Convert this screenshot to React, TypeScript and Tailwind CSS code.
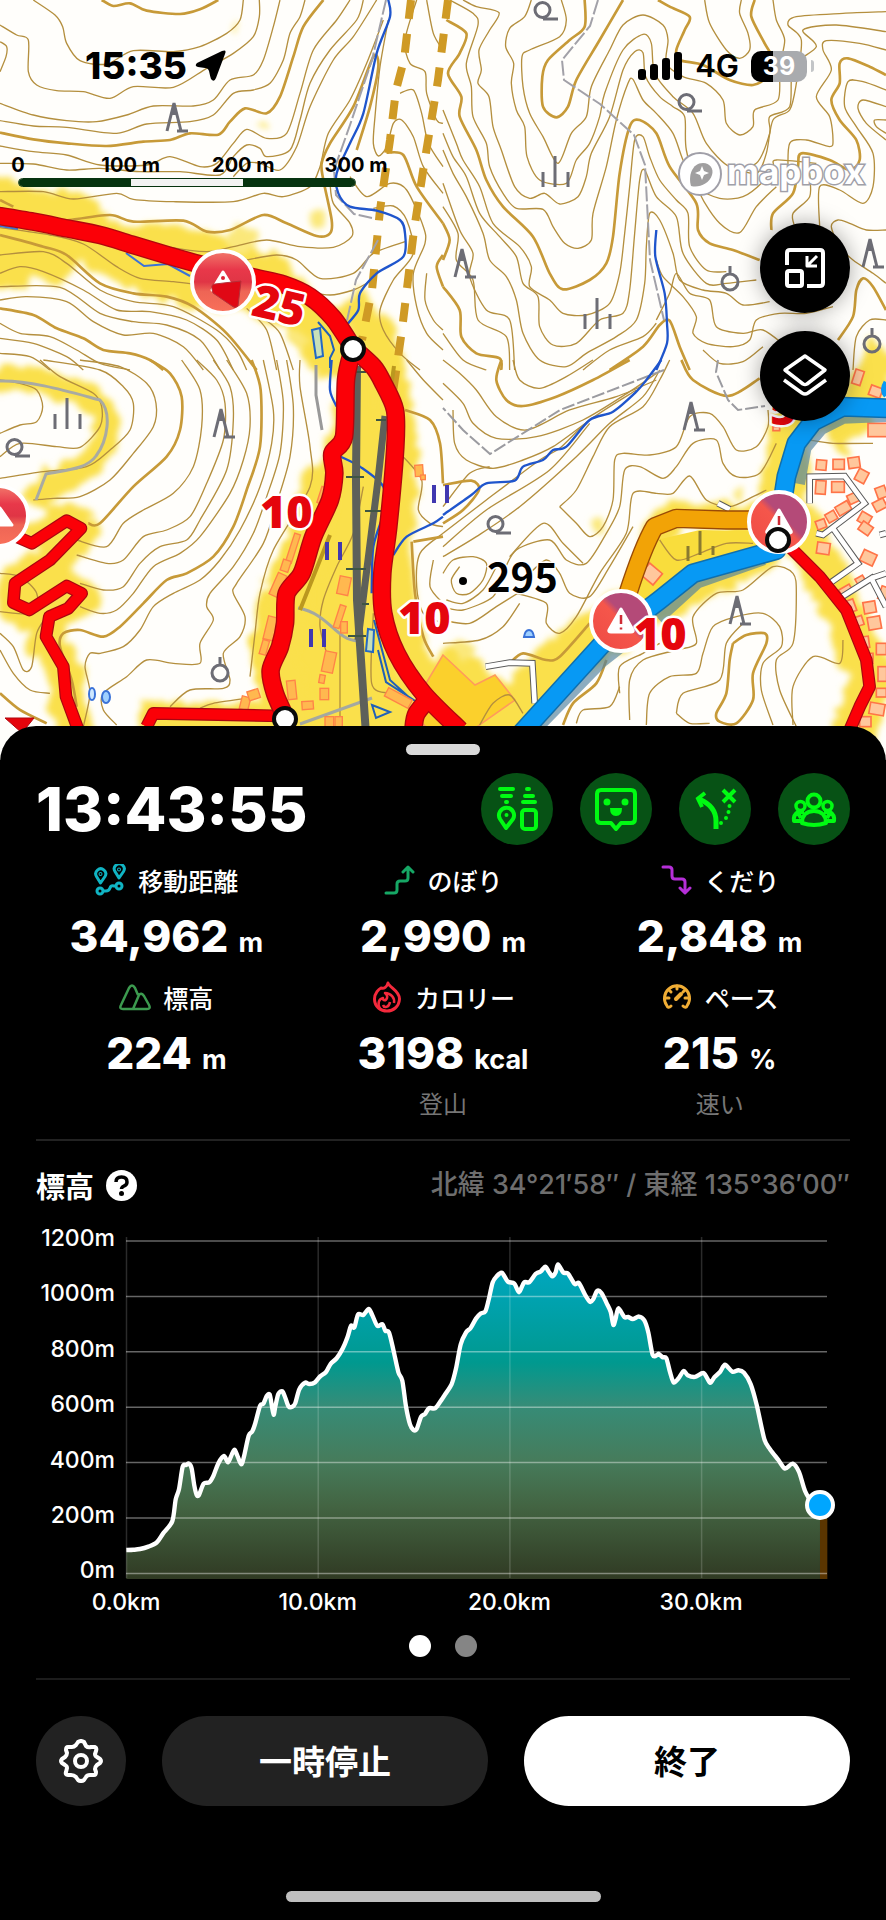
import React from "react";

/* ---------- geometry helpers ---------- */

type Pt = [number, number];

const parse = (s: string): Pt[] =>
  s.trim().split(/\s+/).map((p) => p.split(",").map(Number) as unknown as Pt);

const smooth = (s: string): string => {
  const p = parse(s);
  let d = `M${p[0][0]} ${p[0][1]}`;
  for (let i = 0; i < p.length - 1; i++) {
    const a = p[i - 1] ?? p[i];
    const b = p[i];
    const c = p[i + 1];
    const e = p[i + 2] ?? c;
    d += `C${b[0] + (c[0] - a[0]) / 7} ${b[1] + (c[1] - a[1]) / 7} ${c[0] - (e[0] - b[0]) / 7} ${c[1] - (e[1] - b[1]) / 7} ${c[0]} ${c[1]}`;
  }
  return d;
};

/* The map is drawn as four tiles, three units to the pixel. */
const origin = ["translate(0 0)", "translate(443 0)", "translate(0 360)", "translate(443 360)"];

function Lines({ tile, paths, ...rest }: { tile: number; paths: string[] } & React.SVGProps<SVGGElement>) {
  return (
    <g transform={`${origin[tile]} scale(.33333)`} fill="none" strokeLinejoin="round" {...rest}>
      {paths.map((p, i) => (
        <path key={i} d={smooth(p)} />
      ))}
    </g>
  );
}

const thin: string[][] = [
  [
    "100,0 165,45 188,80 200,130 240,182 320,192 400,152 520,155 600,140 680,100 720,60 730,0",
    "0,75 50,105 85,120 85,215 110,255 170,272 250,275 330,295 400,260 520,262 620,205 700,160 760,110 778,50 778,0",
    "0,125 20,140 18,170 0,215",
    "0,310 100,345 200,362 290,365 380,345 460,318 580,318 640,300 690,240 760,225 790,180 820,80 840,0",
    "0,362 100,378 200,382 350,400 440,372 570,365 640,345 700,280 760,270 810,250 850,180 870,100 900,50 915,0",
    "0,438 100,455 200,465 300,495 440,495 510,470 600,500 650,490 700,430 740,388 800,415 860,400 900,280 940,150 1010,60 1050,0",
    "0,490 100,492 200,510 300,505 420,515 540,515 660,525 700,470 740,435 780,445 800,470 870,450 900,360 930,250 990,150 1070,60 1090,0",
    "0,575 130,575 220,597 350,580 400,598 520,605 700,605 790,580 850,590 930,560 960,500 985,400 1050,300 1100,190 1150,60",
    "700,530 740,490 780,490 840,510 890,440 930,320 1000,180 1060,110 1130,0",
    "330,700 500,740 620,755 700,740 800,720 900,740 1000,742 1055,710 1050,670 1000,610 990,550",
    "740,780 830,765 890,780 960,835 1060,820 1120,760 1215,725",
    "900,870 990,885 1060,870 1100,850",
    "0,683 150,705 250,732 350,800 420,835 520,845 600,855",
    "0,765 130,755 200,790 300,870 400,905 520,920 650,990 710,1050 740,1110",
    "0,820 60,800 130,815 250,870 350,930 450,935 560,960 650,1020 700,1110",
    "0,860 180,862 300,940 400,965 500,975 600,1020 660,1110",
    "0,900 80,890 200,905 280,965 370,1005 460,1000 550,1040 610,1110",
    "0,970 60,1000 150,1010 230,1050 300,1090 390,1110",
    "0,1015 100,1030 200,1070 250,1110",
    "0,1060 90,1070 150,1110",
    "740,925 800,990 830,1110",
    "790,955 840,1000 880,1110",
    "1165,60 1140,200 1125,350 1120,430 1135,468 1160,440 1180,370 1205,360 1240,410 1270,500 1329,580",
    "1250,0 1215,120 1230,190 1275,215 1280,280 1310,360 1329,370",
    "1200,280 1240,270 1265,340 1285,430 1329,500",
    "1050,530 1100,590 1170,550 1220,570 1270,680 1275,730 1240,820 1250,920 1280,1000 1329,1050",
    "1120,625 1180,618 1220,660 1240,760 1180,840 1140,930 1150,990 1200,1060 1260,1110",
    "1280,820 1275,900 1300,960 1329,990",
    "1280,0 1300,100 1329,150",
  ],
  [
    "60,0 100,20 168,38 140,90 108,150 115,210 105,250 138,290 150,380 175,450 215,560 260,595 305,580 350,612 405,590 430,530 445,460 500,350 540,210 575,155 600,158 608,230 650,290 690,320 725,350 730,450 770,580 830,670 890,698 940,620 1000,560",
    "20,0 90,40 105,75 70,190 85,260 90,350 130,430 140,500 180,580 220,625 300,628 330,680 365,730 405,745 445,720 450,640 490,500 520,360 555,250 570,238 600,300 640,340 690,400 720,480 760,560 830,595 900,590 960,545 990,500 1000,480 1120,490",
    "265,0 245,50 200,85 188,140 212,190 205,250 220,330 245,380 252,470 290,540 370,550 400,480 440,430 470,350 485,280 540,150 600,103 625,130 635,220 690,290 750,340 790,430 860,500 940,490 980,400 980,350 1040,320 1050,200 1120,140 1080,90 1180,75 1329,95",
    "355,0 370,60 350,110 260,150 237,170 240,260 260,340 300,410 345,490 385,400 430,350 445,260 500,150 540,75 600,45 660,75 675,120 670,190 720,230 790,250 840,300 850,370 890,405 930,380 935,330 1005,300 1010,200 1025,120 1000,60 990,0",
    "785,0 800,70 850,150 890,175 920,150 915,100 890,40 895,0",
    "1329,35 1200,40 1060,50 1035,75 1075,120 1060,250 1040,330 990,360 970,460 940,520 860,500",
    "1329,150 1250,130 1150,122 1140,150 1165,210 1120,290 1160,350 1170,420 1160,440 1090,420 1040,430 1035,520",
    "1329,270 1260,245 1215,245 1205,320 1240,380 1290,460 1290,560 1260,610 1190,570 1130,560 1130,680",
    "1329,320 1260,300 1245,325 1270,370 1329,420",
    "1329,360 1295,360 1300,380 1329,400",
    "1100,520 1100,590 1050,640 1055,680",
    "0,330 40,430 60,480 110,560 150,670 230,740 265,800 260,860 320,900 360,940 430,945 500,910 530,820 545,700 560,560 575,420 600,410 620,470 650,540 700,600 735,640 740,740 790,810 850,815",
    "0,400 30,470 70,530 110,640 170,710 220,770 240,850 285,890 290,980 330,1035 400,1030 470,960 540,940 560,870 575,700 590,540 605,510 640,590 700,650 720,760 790,850 850,850 940,840",
    "0,450 30,520 70,590 120,700 140,780 190,830 220,900 240,1000 290,1080 370,1100 430,1060 520,1010 580,960 605,850 610,740 620,640 650,660 690,760 710,840 780,870 850,880 900,915 980,905",
    "0,550 50,690 90,760 80,830 130,930 200,960 215,1110",
    "0,620 45,700 40,780 90,840 105,960 190,1010 200,1110",
    "640,780 660,830 720,890 760,950 750,1000 790,1030 870,1040 920,1020 940,960 1010,940 1090,940 1170,920",
    "640,960 680,880 700,820 740,880 800,900 820,980 900,1000 960,990 1030,1040",
    "780,1050 830,1090 900,1085 960,1040",
    "1329,690 1270,690 1220,670 1185,660 1165,680 1190,740 1230,780 1290,820 1329,850",
    "0,1000 60,1080 130,1110",
    "1329,960 1280,960 1240,1010 1230,1110",
    "420,1110 500,1050 600,1010 640,970",
  ],
  [
    "130,0 300,30 370,80 400,130 390,210 330,270 260,320 130,335 0,355",
    "240,0 360,20 440,70 468,130 460,200 400,280 330,360 240,410 160,415 100,420",
    "0,60 60,70 110,90 128,140 110,185 60,195 0,220",
    "120,0 180,50 280,100 305,140 300,200 240,262 170,260 60,250 0,290",
    "0,640 60,650 110,700 100,760 0,755",
    "545,0 600,90 605,200 580,320 520,400 430,450 370,490 320,560 230,540",
    "590,0 650,60 675,130 670,240 620,370 570,470 500,510 430,530 370,600 320,610 230,585",
    "640,0 690,80 700,180 680,330 600,480 560,540 480,560 420,610 370,680 310,690 240,670",
    "680,0 740,100 750,200 730,300 690,400 600,530 540,580 460,620 400,700 350,750 300,760 240,740",
    "790,0 820,150 815,250 780,380 720,510 660,600 600,660 520,700 460,740 420,810 370,860 300,880 270,880 255,920 270,1000 250,1100",
    "830,0 850,130 840,280 800,410 760,520 700,620 630,700 620,740 640,780 600,850 600,910 520,910 440,900 380,950 310,1000 310,1050 350,1095",
    "860,0 880,140 870,290 830,430 790,550 710,670 700,700 735,770 720,830 670,880 690,960 670,985 570,990 510,1040",
    "900,0 900,80 930,260 930,380 820,570 780,700 765,820 750,950",
    "0,870 40,940 90,990 150,1000",
    "0,820 40,860 70,930 95,920 110,820 140,770",
    "600,1045 640,1030 740,1015",
    "1220,0 1270,60 1329,120",
    "1200,280 1265,360 1255,450 1290,490 1329,500",
    "1329,520 1260,580 1250,680 1270,760 1329,790",
    "1300,600 1290,680 1329,730",
    "1090,380 1060,520 1010,620 970,720 960,800 980,880",
    "1020,820 1020,1100",
    "1120,760 1115,970 1170,1000",
  ],
  [
    "0,70 60,130 90,190 160,235 280,230 420,180 560,95 640,40",
    "0,0 50,40 100,90 160,170 250,210 380,150 520,110 640,60",
    "210,0 230,60 290,85 370,50 450,0",
    "30,150 35,250 70,300 150,325 240,300 330,260 440,180",
    "0,520 130,420 290,300 350,265 440,180 580,90",
    "0,560 130,450 320,330 440,190",
    "0,590 100,530 230,440 400,290 500,190 600,110 650,30",
    "350,440 400,390 450,290 500,200 600,140 650,60 680,0",
    "350,440 400,490 440,530 480,500 510,420 515,300 540,280 620,285 700,260 740,170 800,160 840,200 880,270 940,260 975,200 975,150",
    "0,440 80,340 140,320",
    "0,740 60,750 150,710 180,640 220,570 320,540 370,600 430,610 490,520 530,440 545,330 590,320 660,355 700,320 750,250 820,240 840,310 880,350 950,340 1000,250",
    "220,700 310,730 310,790 350,820 400,770 470,640 550,520 570,400 640,400 690,400 740,348 790,420 860,440 930,410 970,390",
    "200,590 300,490 360,550 420,610",
    "250,650 310,600 350,640 380,700 440,710 500,620 570,500",
    "0,640 30,600 90,590 130,610 120,660 80,700 40,700 25,660 50,620",
    "10,720 60,730 120,690 160,620",
    "0,780 80,790 160,740 240,690",
    "0,850 110,840 180,800 230,730",
    "560,1080 560,960 600,900 700,870 760,850 750,770 820,700 900,690 990,620 1050,640 1060,700 1050,850 1000,900 1010,990 1060,1100",
    "610,1095 620,1000 680,950 760,940 780,880 810,800 880,770 960,760 1010,800 1015,860 960,910 955,990 990,1095",
    "530,1000 530,920 600,880 650,850",
    "700,1060 720,1000 830,960 850,850 900,790",
    "1050,1095 1050,980 1110,890 1190,910 1200,840",
    "400,1090 420,1050 500,1040 530,980",
    "110,1095 150,1030 200,1005 240,1060",
    "650,540 700,600 770,580 850,550 930,550",
    "1100,240 1170,250 1290,250",
    "700,1060 740,1090 800,1090",
  ],
];

const thick: string[][] = [
  [
    "0,398 100,418 200,430 320,438 430,425 510,420 570,400 655,404 690,365 735,325 800,340 840,290 880,170 910,80 970,0",
    "305,0 340,18 390,10 440,32 540,42 600,28 655,0",
    "200,662 330,645 400,665 550,662 620,695 690,690 790,645 860,670 950,708 990,700 995,660 970,540 965,490 990,430 1060,320 1120,170 1135,200 1110,320 1070,450",
    "0,705 130,740 200,765 300,850 400,880 500,890 580,920 680,1000 770,1110",
    "0,925 100,945 170,985 250,1015 310,1050 390,1060 450,1080 490,1110",
    "1160,458 1210,465 1250,560 1329,670",
    "1329,765 1310,800 1329,860",
    "0,600 40,620",
  ],
  [
    "425,0 425,80 380,120 315,180 298,230 300,320 340,352 375,320 400,240 470,120 540,0",
    "645,0 680,20 740,50 725,90 700,150 710,180 780,195 860,240 930,255 970,230 985,170 965,130 925,50 935,0",
    "1329,225 1280,200 1215,175 1190,190 1190,250 1165,300 1190,360 1240,420 1250,480 1220,510 1160,480 1075,460 1065,500 1050,580 990,640 985,690",
    "10,60 70,100 50,160 15,220 55,290 50,350 100,450 130,540 180,620 270,710 320,820 360,868 440,840 490,790 510,710 530,520 560,380 590,360 640,400 680,500 760,610 765,690 800,730 870,750 950,780",
    "0,860 50,930 55,1010 100,1060 170,1075 175,1110",
    "500,1110 600,1040 650,975 680,962 710,1040 740,1110",
    "1329,930 1290,860 1260,835 1240,870 1230,950 1185,1020",
    "0,670 20,720 0,780",
  ],
  [
    "450,0 510,40 545,110 540,210 500,290 400,380 300,490 265,490",
    "755,0 782,90 780,260 740,390 700,500 640,590 560,640 500,660 430,730 360,800 310,830 240,810 190,820 180,860 215,960 230,1040",
    "1215,150 1290,180 1320,250 1329,370",
    "0,1000 60,1050 140,1090",
    "1235,545 1245,700 1270,830 1300,890",
    "1329,530 1240,545",
  ],
  [
    "175,0 160,60 190,120 240,138 340,110 450,60 560,0",
    "715,0 750,60 855,108 950,55",
    "0,375 85,362 108,390 60,450 0,490",
    "870,850 910,825 965,820 970,850 930,940 930,1020 880,1090 830,1085 820,1060 850,1000 860,900 870,850",
    "200,910 240,880 310,900 350,890 440,790",
    "360,1095 390,1030 460,970 490,900",
  ],
];

const water: string[][] = [
  [
    "1165,0 1170,50 1130,160 1090,340 1050,430 1010,520 1015,580 1050,620 1130,632 1200,660 1215,700 1210,770 1130,820 1080,880 1075,930 1040,975",
  ],
  ["640,690 637,770 665,880 672,970 672,1030 640,1110"],
  ["1180,585 1220,530 1300,490 1329,470", "1022,290 1080,320 1150,380 1150,460 1120,560 1115,700", "995,0 990,90 1010,140"],
  ["655,0 610,60 580,95 510,155 440,180 370,260 330,270 300,300 240,320 215,362 130,370 85,405 0,465"],
];

const redWide: { t: number; p: string }[] = [
  { t: 0, p: "-20,645 100,665 200,685 300,705 400,735 500,765 600,793 760,832 850,853 930,890 1000,955 1060,1045" },
  { t: 2, p: "1055,-20 1038,60 1032,230 997,280 1003,340 990,420 940,530 905,640 860,700 855,790 840,860 812,930 825,1000 860,1080" },
  { t: 2, p: "1060,-35 1120,20 1150,70 1185,150 1186,260 1165,500 1147,640 1150,760 1190,880 1270,1000 1380,1110" },
  { t: 2, p: "1300,1000 1250,1060 1240,1110" },
];
const redNarrow: { t: number; p: string }[] = [
  { t: 2, p: "50,530 95,550 200,482 243,505 150,600 45,670 40,728 88,750 200,678 245,700 205,745 148,770 138,830 190,920 198,1010 235,1110" },
  { t: 2, p: "850,1068 460,1060 440,1100" },
  { t: 3, p: "1040,560 1130,650 1210,750 1270,900 1280,980 1250,1040 1220,1110" },
];

const eastHouses: [number, number, number, number, number][] = [
  [1120, 300, 30, 30, 5], [1170, 298, 34, 30, 0], [1216, 292, 34, 32, -8], [1118, 362, 30, 40, 4], [1166, 365, 38, 32, 0],
  [1240, 330, 32, 36, 28], [1232, 30, 26, 44, 18], [1180, 430, 42, 30, -30], [1150, 456, 30, 28, -30], [1215, 400, 34, 28, -25],
  [1248, 460, 34, 32, 30], [1292, 420, 36, 30, -28], [1120, 480, 28, 26, -20], [1122, 548, 38, 34, 8], [1250, 490, 36, 30, 35],
  [1255, 575, 42, 36, 25], [1300, 380, 30, 34, -20], [1190, 680, 36, 22, -30], [1240, 650, 26, 24, -30], [1210, 720, 26, 36, -20],
  [1262, 725, 36, 34, -10], [1230, 770, 30, 28, -18], [1275, 770, 38, 38, -10], [1250, 830, 28, 34, -8], [1300, 850, 30, 34, 0],
  [1262, 880, 28, 30, 0], [1305, 920, 26, 44, 0], [1280, 1030, 44, 34, 10], [1300, 985, 30, 26, 0], [1275, 190, 60, 40, 0],
  [1280, 80, 36, 30, 20], [1250, 1070, 34, 30, 0], [1310, 680, 24, 40, 20], [600, 620, 50, 44, 40], [990, 200, 20, 12, 0],
];

const westHouses: [number, number, number, number, number][] = [
  [1245, 315, 24, 34, -4], [1262, 345, 14, 14, 0], [870, 520, 18, 90, 18], [845, 600, 24, 34, 18], [820, 640, 28, 70, 24],
  [797, 770, 30, 70, 14], [783, 840, 20, 44, 16], [862, 962, 26, 56, -6], [906, 1024, 34, 24, -4], [722, 1010, 26, 40, 14],
  [744, 990, 34, 28, -18], [1015, 650, 34, 54, 12], [1010, 735, 18, 70, 18], [1022, 785, 20, 34, 0], [970, 875, 34, 62, 12],
  [958, 945, 16, 24, 10], [960, 985, 26, 34, 0], [975, 1070, 26, 30, 0], [1005, 1070, 22, 30, 0], [1155, 1000, 80, 28, 28],
  [958, 380, 12, 50, 18],
];

/* Conifer, broadleaf, bamboo and orchard symbols, in page pixels. */
const conifers: Pt[] = [[176, 117], [464, 263], [872, 253], [223, 423], [693, 416], [739, 610]];
const bamboos: Pt[] = [[555, 171], [597, 313], [67, 413]];
const broadleaves: Pt[] = [[542, 10], [686, 102], [14, 447], [495, 524]];
const orchards: Pt[] = [[730, 282], [872, 344], [220, 673]];
const paddies: Pt[] = [[440, 494], [333, 551], [317, 638]];

function Hazard({ x, y }: { x: number; y: number }) {
  return (
    <g transform={`translate(${x} ${y})`}>
      <circle r="30" fill="url(#pin)" stroke="#fff" strokeWidth="4" />
      <path d="M0 -12 L12 9 Q13 11 10 11 L-10 11 Q-13 11 -12 9Z" fill="#fff" stroke="#fff" strokeWidth="3" strokeLinejoin="round" />
      <path d="M0 -6V3M0 6.500V8.500" stroke="#cf2b35" strokeWidth="2.500" />
    </g>
  );
}

function TopoMap() {
  return (
    <svg viewBox="0 0 886 760" className="block h-auto w-full bg-[#fffefb]" role="img" aria-label="地形図">
      <defs>
        <filter id="soft" x="-10%" y="-10%" width="120%" height="120%">
          <feTurbulence type="fractalNoise" baseFrequency="0.06" numOctaves="2" seed="4" result="n" />
          <feDisplacementMap in="SourceGraphic" in2="n" scale="20" xChannelSelector="R" yChannelSelector="G" />
          <feGaussianBlur stdDeviation="3" />
        </filter>
        <linearGradient id="pin" x1="0" y1="1" x2="1" y2="0">
          <stop offset="0" stopColor="#ee4a44" />
          <stop offset=".5" stopColor="#f5564b" />
          <stop offset=".58" stopColor="#b44a78" />
          <stop offset=".8" stopColor="#b44a78" />
          <stop offset="1" stopColor="#ef4b52" />
        </linearGradient>
        <linearGradient id="pinRed" x1="0" y1="0" x2="0" y2="1">
          <stop offset="0" stopColor="#f2786b" />
          <stop offset=".3" stopColor="#e8384a" />
          <stop offset=".5" stopColor="#e03545" />
          <stop offset=".65" stopColor="#ee6555" />
          <stop offset="1" stopColor="#f9705a" />
        </linearGradient>
      </defs>

      <g filter="url(#soft)" fill="#fae04c">
        <path d="M-20 175L30 186 90 196 112 222 160 226 215 234 262 250 290 262 318 300 345 312 356 350 345 378 318 380 290 330 240 310 190 305 150 298 110 278 80 262 56 290 30 270 20 290 -20 285Z" />
        <path d="M340 370L376 366 396 420 392 560 390 650 430 720 520 740 440 760 280 760 262 710 250 640 270 570 300 520 330 440Z" />
      </g>
      <g filter="url(#soft)" fill="none" stroke="#fae04c" strokeLinejoin="round">
        <path d="M-10 382C40 372 90 392 104 412C116 450 90 472 50 482L36 505" strokeWidth="26" />
        <path d="M30 543L66 520 84 530 50 563 16 585 16 606 32 612 66 588 84 596 52 618 46 640 66 670 66 700 80 740" strokeWidth="36" />
        <path d="M140 722H290L275 650 300 560 325 470" strokeWidth="40" />
        <path d="M350 300L372 330 392 380 400 450 395 560 400 630 430 690" strokeWidth="36" />
        <path d="M640 590L655 530 680 514 780 520" strokeWidth="26" />
        <path d="M810 400L790 440 782 500 830 580 872 680 850 740" strokeWidth="44" />
        <path d="M500 730L560 660 620 620 700 575 770 540" strokeWidth="52" />
        <path d="M440 655L500 700 470 730 540 700 560 660" strokeWidth="36" />
        <path d="M886 350L850 420 830 440" strokeWidth="38" />
      </g>
      <g fill="#fbe87a" filter="url(#soft)">
        <circle cx="318" cy="218" r="8" />
        <circle cx="236" cy="28" r="4" />
        <circle cx="264" cy="125" r="4" />
        <circle cx="240" cy="240" r="14" />
        <circle cx="598" cy="526" r="9" />
        <circle cx="740" cy="494" r="6" />
        <circle cx="465" cy="650" r="10" />
        <circle cx="300" cy="340" r="8" />
      </g>
      <path d="M656 540L700 530 790 532 760 548 700 570 660 600 630 610Z" fill="#f9dd3c" />
      <path d="M443 655L475 685 495 675 515 700 475 728 443 745 410 710Z" fill="#fbd02c" stroke="#ff9a5c" strokeWidth="1.500" />

      {thin.map((p, i) => (
        <Lines key={i} tile={i} paths={p} stroke="#b48f3e" strokeWidth="4" />
      ))}
      {thick.map((p, i) => (
        <Lines key={i} tile={i} paths={p} stroke="#c79a38" strokeWidth="8" />
      ))}

      {/* paths and rail tunnel */}
      <g fill="none">
        <path d="M411 0L404 60 396 90 390 140 380 210 372 290 362 340" stroke="#cf9a25" strokeWidth="8" strokeDasharray="19 15" />
        <path d="M448 0L438 80 424 165 414 230 402 330 393 392" stroke="#cf9a25" strokeWidth="8" strokeDasharray="19 15" />
        <path d="M598 0L590 26 562 60 564 80 600 104 634 135 645 165 650 260 664 320M386 0L372 60 350 125 334 170 336 195 354 214 372 218M378 240L356 280 346 325" stroke="#a2a1a8" strokeWidth="2" strokeDasharray="15 3" />
        <path d="M664 370L560 410 490 454 463 430 443 408M718 360L716 372 728 400 738 410 765 406" stroke="#9b9ba0" strokeWidth="2" strokeDasharray="13 3" />
        <path d="M0 381C30 380 70 392 100 400C112 412 108 440 96 456C86 470 64 470 46 474L36 500" stroke="#a9aaa2" strokeWidth="3" />
        <path d="M298 608C330 614 335 640 358 641M300 724L372 698" stroke="#a4a8a0" strokeWidth="3" />
        <path d="M316 365V395L322 430" stroke="#999" strokeWidth="3" />
      </g>

      {water.map((p, i) => (
        <Lines key={i} tile={i} paths={p} stroke="#1f55cc" strokeWidth="7" />
      ))}
      <path d="M312 330L320 328 323 356 316 358ZM368 629L374 630 373 652 366 651Z" fill="#c8e0b8" stroke="#2368c4" strokeWidth="2" />
      <path d="M318 322L330 336 334 350 330 358V368M374 620L382 650 390 680 412 700M378 650L386 682 420 704M372 705L390 712 376 718Z" fill="none" stroke="#2060b8" strokeWidth="2" />
      <g fill="none" stroke="#3a72d8" strokeWidth="2">
        <ellipse cx="92" cy="694" rx="3" ry="6" fill="#cde7ff" />
        <ellipse cx="106" cy="697" rx="4" ry="6" fill="#9fd0ff" />
        <path d="M524 637H534Q533 630 529 630 525 630 524 637Z" fill="#9fd0ff" />
        <path d="M126 253L144 266 168 264 190 276M0 226L18 229" />
      </g>

      <g transform="translate(443 360) scale(.33333)" fill="#ffc79c" stroke="#ff7448" strokeWidth="5">
        {eastHouses.map(([x, y, w, h, r], i) => (
          <rect key={i} x={x} y={y} width={w} height={h} transform={`rotate(${r} ${x + w / 2} ${y + h / 2})`} />
        ))}
      </g>
      <g transform="translate(0 360) scale(.33333)" fill="#ffb84f" stroke="#ff8348" strokeWidth="4">
        {westHouses.map(([x, y, w, h, r], i) => (
          <rect key={i} x={x} y={y} width={w} height={h} transform={`rotate(${r} ${x + w / 2} ${y + h / 2})`} />
        ))}
      </g>

      {/* white streets */}
      <g transform="translate(443 360) scale(.33333)" fill="none" strokeLinejoin="miter">
        {[
          ["#5a5a5a", 20],
          ["#ffffff", 14],
        ].map(([c, w]) => (
          <path
            key={c}
            stroke={c as string}
            strokeWidth={w}
            d="M1120 520L1140 525 1265 430 1205 348 1100 350V430M1170 505L1245 610 1160 670M1190 715L1285 655 1329 740M1285 655L1329 640M1310 525L1329 520M128 920L200 908 268 910 275 1030M825 430L860 448"
          />
        ))}
      </g>

      {/* railway */}
      <g stroke="#5d605a" fill="none">
        <path d="M357 366L356 480 357 600 366 735" strokeWidth="8" />
        <path d="M385 416L378 480 368 560 358 640" strokeWidth="7" />
        <path d="M356 372H366M376 420H386M346 477H364M365 511H382M346 569H366M348 636H366M362 604H369" strokeWidth="2" stroke="#3e5544" />
      </g>
      <path d="M394 366L390 395M330 535L300 610" stroke="#bb981f" strokeWidth="4" />

      {/* prefectural road */}
      <g transform="translate(443 360) scale(.33333)" fill="none" strokeLinejoin="round">
        <path d="M555 700Q600 560 635 500L700 475 850 480H960" stroke="#9a4a06" strokeWidth="58" />
        <path d="M555 700Q600 560 635 500L700 475 850 480H960" stroke="#f2a306" strokeWidth="50" />
      </g>

      {/* symbols */}
      <g fill="none" stroke="#6d6d75" strokeWidth="3">
        {conifers.map(([x, y], i) => (
          <path key={i} d={`M${x - 9} ${y + 14}L${x - 2} ${y - 14}L${x + 5} ${y + 14}M${x + 1} ${y + 14}H${x + 12}M${x - 2} ${y - 14}V${y - 2}`} />
        ))}
        {bamboos.map(([x, y], i) => (
          <path key={i} d={`M${x} ${y - 15}V${y + 16}M${x - 12} ${y + 1}V${y + 16}M${x + 13} ${y + 1}V${y + 16}`} />
        ))}
        {broadleaves.map(([x, y], i) => (
          <path key={i} d={`M${x - 7} ${y}a7.500 7.500 0 1 0 15 0a7.500 7.500 0 1 0 -15 0M${x + 1} ${y + 9}H${x + 16}`} />
        ))}
        {orchards.map(([x, y], i) => (
          <path key={i} d={`M${x - 8} ${y}a8 8 0 1 0 16 0a8 8 0 1 0 -16 0M${x} ${y - 8}V${y - 16}`} />
        ))}
        <path d="M700 531V555M688 546V561M713 546V555" stroke="#8a7a30" />
        <g stroke="#4038b0" strokeWidth="4">
          {paddies.map(([x, y], i) => (
            <path key={i} d={`M${x - 6} ${y - 9}V${y + 9}M${x + 7} ${y - 9}V${y + 9}`} />
          ))}
        </g>
      </g>

      {/* route network */}
      {redNarrow.map((r, i) => (
        <g key={i} transform={`${origin[r.t]} scale(.33333)`} fill="none" strokeLinejoin="round">
          <polyline points={r.p} stroke="#a80610" strokeWidth="38" />
          <polyline points={r.p} stroke="#fb0007" strokeWidth="31" />
        </g>
      ))}
      {redWide.map((r, i) => (
        <Lines key={i} tile={r.t} paths={[r.p]} stroke="#b1060d" strokeWidth="56" />
      ))}
      {redWide.map((r, i) => (
        <Lines key={i} tile={r.t} paths={[r.p]} stroke="#fb0007" strokeWidth="48" />
      ))}
      <path d="M5 718H34L22 733Z" fill="#e5040b" stroke="#b1060d" />
      <g transform="translate(443 360) scale(.33333)" fill="none" strokeLinejoin="round">
        <path d="M265 1110L470 900 560 830M640 770L760 660 960 590M1060 370L1080 260 1130 200 1200 165 1329 160" stroke="#4e7fa0" strokeWidth="52" opacity=".65" />
        <path d="M235 1120L480 850 650 720 750 640 1000 570 1010 480 1030 350 1060 250 1110 185 1200 140 1340 145" stroke="#0f6fae" strokeWidth="60" />
        <path d="M235 1120L480 850 650 720 750 640 1000 570 1010 480 1030 350 1060 250 1110 185 1200 140 1340 145" stroke="#0799f4" strokeWidth="51" />
      </g>
      <path d="M886 382Q881 390 886 396" fill="none" stroke="#0799f4" strokeWidth="5" />

      {/* pins */}
      <g transform="translate(223 282)">
        <circle r="31" fill="url(#pinRed)" stroke="#fff" strokeWidth="4" />
        <path d="M0 -10L11 8H-11Z" fill="#fff" stroke="#fff" strokeWidth="3" strokeLinejoin="round" />
        <path d="M-11 7Q-12 2 -8 2L18 -1 15 24Q12 27 9 24L-10 11Z" fill="#e00815" stroke="#b5303a" />
        <circle cy="-4" r="2" fill="#d23" />
      </g>
      <g transform="translate(-2 516)">
        <circle r="30" fill="url(#pinRed)" stroke="#fff" strokeWidth="4" />
        <path d="M2 -8L14 9H-10Z" fill="#fff" stroke="#fff" strokeWidth="3" strokeLinejoin="round" />
      </g>
      <Hazard x={779} y={522} />
      <Hazard x={621} y={621} />
      <g fill="#fff" stroke="#0a0a0a" strokeWidth="4">
        <circle cx="353" cy="349" r="11" />
        <circle cx="285" cy="719" r="11" />
        <circle cx="778" cy="540" r="11" />
      </g>

      {/* labels */}
      <g fill="#e5050d" stroke="#fff" strokeWidth="5" strokeLinejoin="round" paintOrder="stroke" className="font-['Noto_Sans',sans-serif] text-[45px] font-black">
        <text x="250" y="315" transform="rotate(13 250 315)">25</text>
        <text x="260" y="528">10</text>
        <text x="398" y="634">10</text>
        <text x="634" y="650">10</text>
        <text x="770" y="425">5</text>
      </g>
      <circle cx="463" cy="581" r="4" />
      <text x="487" y="592" stroke="#fff" strokeWidth="3" paintOrder="stroke" className="font-['Noto_Sans_CJK_JP',sans-serif] text-[40px] font-bold">
        295
      </text>
      <g stroke="#a09fa8" strokeWidth="2">
        <circle cx="700" cy="174" r="21" fill="#fff" />
        <path d="M691 186C688 176 692 163 703 163C710 163 714 169 712 175C709 184 699 188 691 186Z" fill="#a09fa0" stroke="none" />
        <path d="M702 166L704 171 709 173 704 175 702 180 700 175 695 173 700 171Z" fill="#fff" stroke="none" />
        <text x="727" y="184" fill="#fff" strokeWidth="3" paintOrder="stroke" className="font-['Inter',sans-serif] text-[35px] font-bold">
          mapbox
        </text>
      </g>
    </svg>
  );
}

/* ---------- icons ---------- */

const actionIcon = "h-12 w-12";

const ActionLandmarks = () => (
  <svg viewBox="0 0 48 48" className={actionIcon} fill="none" stroke="#00fb12" strokeWidth="4" strokeLinecap="round" strokeLinejoin="round">
    <path d="M7 4H20M9 11H18M13 17H14M34 4H36M32 11H40M30 17H42" />
    <path d="M13 43L7 34A7.500 7.500 0 1 1 20 34Z" />
    <circle cx="13.500" cy="30" r="1" strokeWidth="2" />
    <rect x="29" y="25" width="14" height="19" rx="3" />
  </svg>
);
const ActionFace = () => (
  <svg viewBox="0 0 48 48" className={actionIcon} fill="none" stroke="#00fb12" strokeWidth="4">
    <path d="M9 5H39Q43 5 43 9V34Q43 38 39 38H29L24 44 19 38H9Q5 38 5 34V9Q5 5 9 5Z" strokeLinejoin="round" />
    <path d="M18 23H30Q30 31 24 31 18 31 18 23Z" fill="#00fb12" stroke="none" />
    <circle cx="15" cy="17" r="3.500" fill="#00fb12" stroke="none" />
    <circle cx="33" cy="17" r="3.500" fill="#00fb12" stroke="none" />
  </svg>
);
const ActionDetour = () => (
  <svg viewBox="0 0 48 48" className={actionIcon} fill="none" stroke="#00fb12" strokeWidth="4">
    <path d="M25 44V36C25 27 20 19 8 14" strokeWidth="5" />
    <path d="M14 8L7 13.500 11 22M32 5L44 17M44 5L32 17" />
    <path d="M38.500 21v.1M37.500 27v.1M35 33v.1M30 38v.1" strokeLinecap="round" />
  </svg>
);
const ActionGroup = () => (
  <svg viewBox="0 0 48 48" className={actionIcon} fill="none" stroke="#00fb12" strokeWidth="4">
    <circle cx="24" cy="16" r="6.500" />
    <circle cx="10.500" cy="21" r="4.500" strokeWidth="3.500" />
    <circle cx="37.500" cy="21" r="4.500" strokeWidth="3.500" />
    <path d="M12 38C12 31 16 26 24 26S36 31 36 38Q24 42 12 38Z" strokeLinejoin="round" />
    <path d="M12 36H4Q3 30 8 27H14M36 36H44Q45 30 40 27H34M8 28L11 33M40 28L37 33" strokeLinejoin="round" />
  </svg>
);

const statIcon = "h-8 w-8 shrink-0";

const DistanceIcon = () => (
  <svg viewBox="0 0 32 32" className={statIcon} fill="none" stroke="#10b4c3" strokeWidth="3">
    <path d="M6.500 19L2.500 12.500A5 5 0 1 1 11 12.500ZM25 14L21 7.500A5 5 0 1 1 29.500 7.500Z" strokeLinejoin="round" />
    <circle cx="6.500" cy="10" r=".5" />
    <circle cx="25" cy="5.500" r=".5" />
    <circle cx="6" cy="27" r="3" />
    <circle cx="25" cy="22" r="3" />
    <path d="M9 27H12Q15 27 16 24T20 22H22" />
  </svg>
);
const UpIcon = () => (
  <svg viewBox="0 0 32 32" className={statIcon} fill="none" stroke="#16a765" strokeWidth="3" strokeLinejoin="round" strokeLinecap="round">
    <path d="M3 29H11Q14 29 14 26V20Q14 17 17 17H22Q25 17 25 14V4M20 8L25 3 30 8" />
  </svg>
);
const DownIcon = () => (
  <svg viewBox="0 0 32 32" className={statIcon} fill="none" stroke="#b52fd8" strokeWidth="3" strokeLinejoin="round" strokeLinecap="round">
    <path d="M3 3H9Q12 3 12 6V12Q12 15 15 15H22Q25 15 25 18V28M20 24L25 29 30 24" />
  </svg>
);
const MountainIcon = () => (
  <svg viewBox="0 0 32 32" className={statIcon} fill="none" stroke="#3c9a4f" strokeWidth="2.500" strokeLinejoin="round">
    <path d="M4 28Q0 28 2 24L10 7Q13 2 16 7L19 14M4 28H28Q32 28 30 24L25 15Q22 11 20 14L14 28" />
  </svg>
);
const FlameIcon = () => (
  <svg viewBox="0 0 32 32" className={statIcon} fill="none" stroke="#f4293c" strokeWidth="3" strokeLinejoin="round">
    <path d="M17 2C18 6 29 10 28.500 18C28 26 22 30 16 30S3.500 26 3.500 18C3.500 12 8 8 10 7C13 8 16 6 17 2Z" />
    <path d="M9 28C6 22 8 18 12 17C12 20 15 20 16 17C17 14 15 13 14 12C20 12 24 17 23 22M12 24C13 27 18 27 19 21" strokeWidth="2.500" />
  </svg>
);
const GaugeIcon = () => (
  <svg viewBox="0 0 32 32" className={statIcon} fill="none" stroke="#f0ad35" strokeWidth="3" strokeLinecap="round">
    <path d="M10 25Q7 28 5.500 24A12.500 12.500 0 1 1 26.500 24Q25 28 22 25" />
    <path d="M16 5V8M5 17H8M27 17H24M8 9L10 11M24 9L22 11" strokeWidth="3" />
    <path d="M15 18L20 13" strokeWidth="4" />
  </svg>
);

/* ---------- pieces ---------- */

function Stat({ icon, label, value, unit, note }: { icon: React.ReactNode; label: string; value: string; unit: string; note?: string }) {
  return (
    <div className="flex flex-col items-center">
      <dt className="flex h-9 items-center gap-3 font-['Noto_Sans_CJK_JP',sans-serif] text-[25px] font-medium leading-9">
        {icon}
        {label}
      </dt>
      <dd className="mt-2 flex h-[60px] items-baseline gap-[10px]">
        <span className="text-[44px] font-extrabold leading-[60px]">{value}</span>
        <span className="text-[27px] font-bold leading-[60px]">{unit}</span>
      </dd>
      {note && <dd className="font-['Noto_Sans_CJK_JP',sans-serif] text-[24px] leading-10 text-[#767676]">{note}</dd>}
    </div>
  );
}

const elevation =
  "379,1217 400,1216 420,1214 445,1207 470,1195 490,1168 517,1133 527,1070 537,1040 548,975 558,970 567,966 575,980 583,1030 590,1057 597,1057 611,1024 628,1020 640,1002 655,965 672,944 684,962 696,938 704,926 713,945 724,968 732,945 746,885 757,872 766,848 780,798 790,792 800,770 809,765 815,795 821,824 826,800 835,764 847,756 856,775 866,800 878,800 886,790 898,750 915,731 928,735 945,730 960,713 978,700 992,676 1010,660 1028,632 1042,600 1053,566 1063,570 1074,533 1090,534 1106,517 1117,535 1132,566 1147,561 1156,580 1167,585 1180,635 1195,700 1207,725 1218,800 1230,852 1240,868 1250,866 1263,830 1275,822 1287,805 1306,805 1325,780 1335,765 1355,735 1368,690 1382,620 1398,585 1412,572 1428,545 1442,530 1456,524 1466,490 1478,440 1490,422 1506,412 1523,437 1543,443 1557,468 1572,440 1588,439 1607,415 1622,408 1636,394 1646,408 1657,422 1667,410 1674,388 1690,411 1704,414 1724,444 1737,442 1755,475 1770,496 1780,488 1791,465 1804,470 1820,500 1832,525 1840,563 1847,545 1855,515 1873,540 1885,540 1898,546 1917,539 1933,550 1945,585 1958,650 1972,650 1976,647 1988,657 1999,660 2010,700 2021,730 2035,719 2051,697 2063,709 2085,714 2111,703 2130,731 2143,715 2160,700 2175,679 2197,699 2215,695 2232,702 2252,735 2270,795 2293,895 2310,924 2335,955 2355,980 2378,966 2397,990 2415,1045 2435,1075 2460,1085";

const plot = "translate(-36 -90) scale(.33333 .34435)";

function ElevationChart() {
  const rows = [1200, 1000, 800, 600, 400, 200, 0];
  const cols = ["0.0km", "10.0km", "20.0km", "30.0km"];
  const line = smooth(elevation);
  return (
    <svg viewBox="0 0 814 400" className="block h-auto w-full overflow-visible" role="img" aria-label="標高グラフ">
      <defs>
        <linearGradient id="relief" gradientUnits="userSpaceOnUse" x1="0" y1="390" x2="0" y2="1300">
          <stop offset="0" stopColor="#00a7c0" />
          <stop offset=".31" stopColor="#00998f" />
          <stop offset=".45" stopColor="#368c77" />
          <stop offset=".62" stopColor="#467c5c" />
          <stop offset=".77" stopColor="#436442" />
          <stop offset="1" stopColor="#303a23" />
        </linearGradient>
      </defs>
      <g transform={plot}>
        <path d={`${line}L2460 1301L379 1301Z`} fill="url(#relief)" />
        <rect x="2460" y="1085" width="22" height="216" fill="#5a3500" />
      </g>
      {rows.map((m, i) => (
        <g key={m}>
          <path d={`M90 ${20 + i * 55.400}H791`} stroke="#fff" strokeOpacity=".4" strokeWidth="1.500" />
          <text x="79" y={25 + i * 55.400} textAnchor="end" fill="#fff" className="text-[23px] font-medium">
            {m}m
          </text>
        </g>
      ))}
      {cols.map((c, i) => (
        <g key={c}>
          <path d={`M${90.500 + i * 191.700} 16V357`} stroke="#fff" strokeOpacity=".17" strokeWidth="1.500" />
          <text x={90 + i * 191.700} y="389" textAnchor="middle" fill="#fff" className="text-[23px] font-medium">
            {c}
          </text>
        </g>
      ))}
      <g transform={plot}>
        <path d={line} fill="none" stroke="#fff" strokeWidth="13" strokeLinejoin="round" />
      </g>
      <circle cx="784" cy="284" r="13" fill="#00a6ff" stroke="#fff" strokeWidth="4" />
    </svg>
  );
}

const roundMapButton = "flex h-[90px] w-[90px] items-center justify-center rounded-full bg-black shadow-[0_0_22px_rgba(0,0,0,0.35)]";
const action = "flex h-[72px] w-[72px] items-center justify-center rounded-full bg-[#075215]";

export default function App() {
  return (
    <main className="flex min-h-screen flex-col bg-black font-['Inter','Noto_Sans_CJK_JP',sans-serif] text-white">
      <section className="relative overflow-hidden text-black">
        <TopoMap />

        <div className="absolute inset-x-0 top-0 flex items-center justify-between pl-[85px] pr-[72px] pt-[44px]">
          <div className="flex h-11 items-center gap-2">
            <span className="text-[37px] font-extrabold leading-[44px]">15:35</span>
            <svg viewBox="0 0 32 32" className="h-8 w-8" aria-hidden="true">
              <path d="M2 13L27 1Q32 -1 30 4L21 28Q19 33 16 29Q15 26 14 21Q13 18 10 18L3 17Q-1 16 2 13Z" />
            </svg>
          </div>
          <div className="flex h-11 items-center gap-3">
            <svg viewBox="0 0 45 28" className="h-7 w-[45px]" aria-hidden="true">
              <rect x="0" y="17" width="8" height="11" rx="3" />
              <rect x="12" y="12" width="8" height="16" rx="3" />
              <rect x="24" y="6" width="8" height="22" rx="3" />
              <rect x="36" y="0" width="8" height="28" rx="3" />
            </svg>
            <span className="text-[31px] font-semibold leading-[44px]">4G</span>
            <div className="flex items-center gap-1">
              <span className="flex h-[31px] w-[56px] items-center justify-center rounded-[10px] bg-linear-to-r from-black from-40% to-[#a9abae] to-40% text-[25px] font-bold leading-none text-white">
                39
              </span>
              <span className="h-3 w-[3px] rounded-r-full bg-[#c3c5c7]" />
            </div>
          </div>
        </div>

        <div className="absolute left-[18px] top-[153px] w-[338px]">
          <div className="flex justify-between text-[20px] font-bold leading-6">
            <span className="flex w-0 justify-center whitespace-nowrap">0</span>
            <span className="flex w-0 justify-center whitespace-nowrap">100 m</span>
            <span className="flex w-0 justify-center whitespace-nowrap">200 m</span>
            <span className="flex w-0 justify-center whitespace-nowrap">300 m</span>
          </div>
          <div className="mt-px flex h-[9px] overflow-hidden rounded-full border border-[#06330f]">
            <span className="flex-1 bg-[#06330f]" />
            <span className="flex-1 bg-[#f3f3f3]" />
            <span className="flex-1 bg-[#06330f]" />
          </div>
        </div>

        <div className="absolute right-9 top-[223px] flex flex-col gap-[18px]">
          <button type="button" aria-label="地図を縮小" className={roundMapButton}>
            <svg viewBox="0 0 42 42" className="h-[42px] w-[42px]" fill="none" stroke="#fff" strokeWidth="4" strokeLinejoin="round">
              <path d="M3 18V6Q3 3 6 3H36Q39 3 39 6V36Q39 39 36 39H23" />
              <rect x="3" y="24" width="15" height="15" rx="2" />
              <path d="M33 9L24 18M23 9V19H33" strokeWidth="3" />
            </svg>
          </button>
          <button type="button" aria-label="レイヤー" className={roundMapButton}>
            <svg viewBox="0 0 46 46" className="h-[46px] w-[46px]" fill="none" stroke="#fff" strokeWidth="3.500" strokeLinejoin="round">
              <path d="M23 3L43 17 25 31Q23 32 21 31L3 17Z" />
              <path d="M2 27L20 40Q23 42 26 40L44 27" />
            </svg>
          </button>
        </div>
      </section>

      <section className="relative -mt-[34px] flex flex-1 flex-col rounded-t-[36px] bg-black px-9 pb-[18px] pt-[18px]">
        <div className="mx-auto h-[11px] w-[74px] rounded-full bg-[#d9d9d9]" />

        <div className="mt-[18px] flex items-center justify-between">
          <time className="text-[61px] font-extrabold leading-[72px]">13:43:55</time>
          <div className="flex gap-[27px]">
            <button type="button" aria-label="ランドマーク" className={action}>
              <ActionLandmarks />
            </button>
            <button type="button" aria-label="フィールドメモ" className={action}>
              <ActionFace />
            </button>
            <button type="button" aria-label="ルート外れ" className={action}>
              <ActionDetour />
            </button>
            <button type="button" aria-label="みまもり" className={action}>
              <ActionGroup />
            </button>
          </div>
        </div>

        <dl className="-mx-2 mt-[17px] grid grid-cols-3 gap-y-[13px]">
          <Stat icon={<DistanceIcon />} label="移動距離" value="34,962" unit="m" />
          <Stat icon={<UpIcon />} label="のぼり" value="2,990" unit="m" />
          <Stat icon={<DownIcon />} label="くだり" value="2,848" unit="m" />
          <Stat icon={<MountainIcon />} label="標高" value="224" unit="m" />
          <Stat icon={<FlameIcon />} label="カロリー" value="3198" unit="kcal" note="登山" />
          <Stat icon={<GaugeIcon />} label="ペース" value="215" unit="%" note="速い" />
        </dl>

        <hr className="mt-4 border-t-2 border-[#222]" />

        <div className="mt-6 flex h-10 items-center justify-between">
          <h2 className="flex items-center gap-3 font-['Noto_Sans_CJK_JP',sans-serif] text-[29px] font-bold leading-10">
            標高
            <button type="button" aria-label="ヘルプ" className="h-[31px] w-[31px]">
              <svg viewBox="0 0 31 31" className="h-[31px] w-[31px]">
                <circle cx="15.500" cy="15.500" r="15.500" fill="#fff" />
                <path d="M10 12Q10 7 15.500 7T21 12Q21 15 18 16Q15.500 17 15.500 19" fill="none" stroke="#000" strokeWidth="3.500" />
                <circle cx="15.500" cy="23.500" r="2.500" />
              </svg>
            </button>
          </h2>
          <p className="text-[27px] font-medium leading-10 text-[#6e6e6e]">北緯 34°21′58″ / 東経 135°36′00″</p>
        </div>

        <div className="mt-4">
          <ElevationChart />
        </div>

        <div className="mt-[14px] flex justify-center gap-6">
          <span className="h-[22px] w-[22px] rounded-full bg-white" />
          <span className="h-[22px] w-[22px] rounded-full bg-[#858585]" />
        </div>

        <hr className="mt-[21px] border-t-2 border-[#1c1c1c]" />

        <div className="mt-9 flex gap-9">
          <button type="button" aria-label="設定" className="flex h-[90px] w-[90px] shrink-0 items-center justify-center rounded-full bg-[#222]">
            <svg viewBox="0 0 44 44" className="h-11 w-11" fill="none" stroke="#fff" strokeWidth="4" strokeLinejoin="round">
              <path d="M19 3Q22 1 25 3L27 7Q29 9 32 8L36 8Q38 9 37 12L36 15Q36 17 38 18L41 20Q43 22 41 24L38 26Q36 28 36 30L37 33Q37 36 35 36L31 36Q28 36 27 38L25 41Q22 43 19 41L17 38Q15 36 12 36L9 36Q6 36 7 33L8 29Q8 27 6 26L3 24Q1 22 3 20L6 18Q8 16 8 14L7 11Q7 8 9 8L13 8Q15 8 17 6Z" />
              <circle cx="22" cy="22" r="6" />
            </svg>
          </button>
          <button type="button" className="h-[90px] flex-1 rounded-full bg-[#222] font-['Noto_Sans_CJK_JP',sans-serif] text-[33px] font-bold text-white">
            一時停止
          </button>
          <button type="button" className="h-[90px] flex-1 rounded-full bg-white font-['Noto_Sans_CJK_JP',sans-serif] text-[33px] font-bold text-black">
            終了
          </button>
        </div>

        <div className="mx-auto mt-auto h-[11px] w-[315px] rounded-full bg-[#bfbfbf]" />
      </section>
    </main>
  );
}
